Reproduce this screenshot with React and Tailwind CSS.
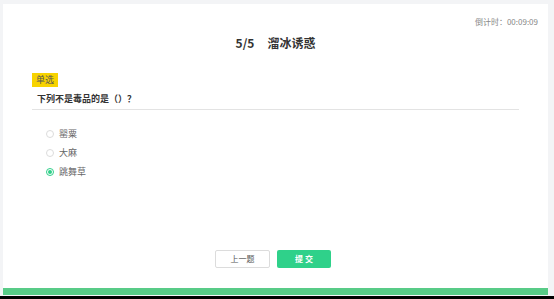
import React, { useState } from "react";

function App() {
  const [answer, setAnswer] = useState(2);
  const options = ["罂粟", "大麻", "跳舞草"];

  return (
    <div
      className="w-[554px] h-[299px] bg-[#f3f4f6] flex flex-col overflow-hidden"
      style={{ fontFamily: '"Noto Sans CJK SC", "Noto Sans", sans-serif' }}
    >
      <div className="ml-[3px] mr-[6px] mt-[4px] flex-1 bg-white flex flex-col">
        {/* timer */}
        <div className="flex justify-end pr-[10px] pt-[12px] text-[8px] leading-[12px] text-[#888]">
          倒计时：00:09:09
        </div>

        {/* title */}
        <div className="flex justify-center mt-[7px] text-[12px] leading-[16px] font-bold text-[#333]">
          <span>5/5</span>
          <span className="ml-[13px]">溜冰诱惑</span>
        </div>

        <div className="px-[29px] mt-[22px]">
          <div className="w-fit bg-[#f7d300] text-[#555] text-[9px] leading-[14px] px-[4px]">
            单选
          </div>
          <div className="mt-[6px] pl-[5px] pb-[4px] text-[9px] leading-[12px] font-bold text-[#333] border-b border-[#e3e3e3]">
            下列不是毒品的是（）？
          </div>

          <div className="mt-[18px] pl-[14px] flex flex-col gap-[7px]">
            {options.map((opt, i) => (
              <label
                key={i}
                className="flex items-center gap-[5px] text-[9px] leading-[12px] text-[#666] cursor-pointer"
                onClick={() => setAnswer(i)}
              >
                <span
                  className={`w-[8px] h-[8px] rounded-full border flex items-center justify-center ${
                    answer === i ? "border-[#2fcf89]" : "border-[#dcdcdc]"
                  }`}
                >
                  {answer === i && (
                    <span className="w-[4px] h-[4px] rounded-full bg-[#2fcf89]"></span>
                  )}
                </span>
                {opt}
              </label>
            ))}
          </div>
        </div>

        <div className="flex-1"></div>

        {/* buttons */}
        <div className="flex justify-center gap-[7px] pr-[5px] mb-[20px]">
          <button className="w-[55px] h-[18px] border border-[#dcdcdc] rounded-[2px] bg-white text-[8px] text-[#555]">
            上一题
          </button>
          <button className="w-[54px] h-[18px] rounded-[2px] bg-[#2fd18a] text-[8px] font-bold text-white">
            提 交
          </button>
        </div>

        <div className="h-[7px] bg-[#58cb87]"></div>
      </div>
      <div className="h-[3px] mt-[1px] bg-black"></div>
    </div>
  );
}

export default App;
